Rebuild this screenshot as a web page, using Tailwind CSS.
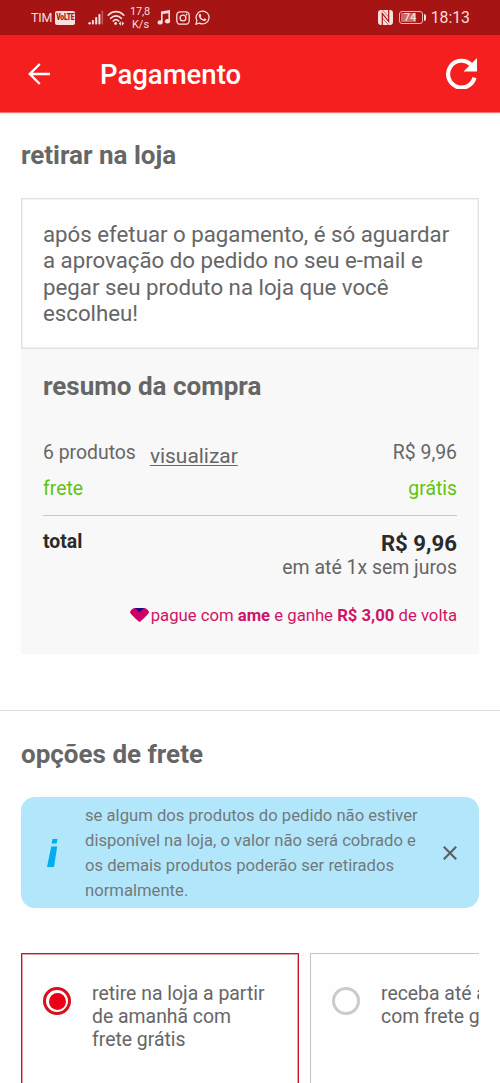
<!DOCTYPE html>
<html lang="pt-BR">
<head>
<meta charset="utf-8">
<meta name="viewport" content="width=device-width, initial-scale=1">
<title>Pagamento</title>
<script src="https://cdn.jsdelivr.net/npm/@tailwindcss/browser@4"></script>
</head>
<body class="h-[1083px] overflow-hidden bg-[#fefefe] font-['Roboto',sans-serif] text-[#666]">
<div class="flex h-[1083px] w-[500px] flex-col overflow-hidden whitespace-nowrap">
  <!-- status bar -->
  <div class="flex h-[35px] shrink-0 items-center bg-[#a61414] pl-[31px] pr-[30px] text-[#fbdede]">
    <span class="mt-px w-[21px] text-[12.5px] leading-none tracking-[-0.2px]">TIM</span>
    <span class="ml-[3px] flex h-[14px] w-5 items-center justify-center rounded-[2px] bg-[#fbdede] text-[#a61414]"><span class="scale-x-[.8] scale-y-[1.15] text-[8.5px] font-black leading-none tracking-[-0.3px]">VoLTE</span></span>
    <svg class="ml-[13px] h-[15px] w-4" viewBox="0 0 16 15" fill="currentColor"><circle cx="1.6" cy="13.3" r="1.2"/><rect x="3.9" y="10" width="2" height="4.5" rx=".8"/><rect x="7.2" y="7" width="2" height="7.5" rx=".8"/><rect x="10.4" y="4" width="2" height="10.5" rx=".8"/><rect x="13.5" y=".5" width="1.6" height="14" rx=".8" opacity=".35"/></svg>
    <svg class="ml-[3px] h-4 w-[18px]" viewBox="0 0 18 16" fill="none" stroke="currentColor" stroke-width="1.7" stroke-linecap="round"><path d="M1.2 5.2C5.5.3 12.5.3 16.8 5.2M3.7 8.3c3-3.3 7.6-3.3 10.6 0M6.2 11c1.7-1.6 3.9-1.6 5.6 0"/><circle cx="8.6" cy="13.5" r="1.4" fill="currentColor" stroke="none"/><path d="m13.9 11.3-2.2 2.2 2.2 2.2zm1 0 2.2 2.2-2.2 2.2z" fill="currentColor" stroke="none"/></svg>
    <span class="ml-[5px] mt-[2px] w-[21px] text-center text-[11px] leading-[12.5px]"><span class="-ml-px tracking-[-0.2px]">17,8</span><br>K/s</span>
    <svg class="ml-[6px] h-[15px] w-[14px]" viewBox="0 0 14 15" fill="currentColor"><path d="M4 1.400 13 0v11.200h-1.600V3.200L5.600 4.100v8.200H4z"/><ellipse cx="3.1" cy="12.4" rx="2.600" ry="2.200"/><ellipse cx="10.500" cy="11.200" rx="2.600" ry="2.200"/></svg>
    <svg class="ml-[5px] h-[14px] w-[14px]" viewBox="0 0 14 14" fill="none" stroke="currentColor" stroke-width="1.300"><rect x=".8" y=".8" width="12.400" height="12.400" rx="3.500"/><circle cx="7" cy="7" r="2.900"/><circle cx="10.600" cy="3.500" r=".9" fill="currentColor" stroke="none"/></svg>
    <svg class="ml-[5px] h-[15px] w-[15px]" viewBox="0 0 24 24" fill="currentColor"><path d="M17.472 14.382c-.297-.149-1.758-.867-2.030-.967-.273-.099-.471-.148-.670.150-.197.297-.767.966-.940 1.164-.173.199-.347.223-.644.075-.297-.150-1.255-.463-2.390-1.475-.883-.788-1.480-1.761-1.653-2.059-.173-.297-.018-.458.130-.606.134-.133.298-.347.446-.520.149-.174.198-.298.298-.497.099-.198.050-.371-.025-.520-.075-.149-.669-1.612-.916-2.207-.242-.579-.487-.500-.669-.510-.173-.008-.371-.010-.570-.010-.198 0-.520.074-.792.372-.272.297-1.040 1.016-1.040 2.479 0 1.462 1.065 2.875 1.213 3.074.149.198 2.096 3.200 5.077 4.487.709.306 1.262.489 1.694.625.712.227 1.360.195 1.871.118.571-.085 1.758-.719 2.006-1.413.248-.694.248-1.289.173-1.413-.074-.124-.272-.198-.570-.347z"/><path d="M1.500 22.500l1.600-5.600A10.300 10.300 0 1 1 7.200 21z" fill="none" stroke="currentColor" stroke-width="2"/></svg>
    <svg class="ml-auto h-[15px] w-[15px]" viewBox="0 0 15 15"><rect width="15" height="15" rx="3" fill="#fbdede"/><path d="M4.300 15V3.500L10.700 11.500V0" fill="none" stroke="#a61414" stroke-width="1.200"/><path d="M4.500 0 10.700 7M4.300 8l6.200 7" fill="none" stroke="#a61414" stroke-width=".6"/></svg>
    <span class="ml-[6px] flex h-[13px] w-6 rounded-[3px] border border-[#f0b5b5] p-px"><span class="flex w-[15px] items-center bg-[#c66b6b]"><span class="ml-[3px] text-[11px] font-medium leading-none">74</span></span></span>
    <span class="ml-px h-[7px] w-[2px] rounded-r bg-[#fbdede]"></span>
    <span class="ml-[5px] mt-px text-[15.800px] leading-none">18:13</span>
  </div>
  <!-- app bar -->
  <header class="flex h-[78px] shrink-0 items-center border-b border-[#f77] bg-[#f61f1f] pl-7 pr-[23px] text-white shadow-[0_1px_2px_rgba(0,0,0,0.08)]">
    <svg class="h-[22px] w-[22px]" viewBox="0 0 22 22" fill="none" stroke="currentColor" stroke-width="2.400"><path d="M22 11H1.800M11.800 1 1.800 11l10 10"/></svg>
    <h1 class="ml-[50px] mt-[3px] text-[27.500px] font-medium leading-none">Pagamento</h1>
    <svg class="ml-auto h-[31px] w-[31px]" viewBox="0 0 30 30"><path d="M24 6.200A13 13 0 1 0 27.600 19" fill="none" stroke="currentColor" stroke-width="4"/><path d="M30 0v13H17z" fill="currentColor"/></svg>
  </header>
  <main class="flex flex-1 flex-col">
    <section class="px-[21px]">
      <h2 class="mt-[27px] text-[26px] font-bold leading-[30px]">retirar na loja</h2>
      <p class="mt-7 h-[151px] border border-[#e0e0e0] px-[21px] pt-[22px] text-[22.250px] leading-[26.400px] ring-1 ring-inset ring-[#f3f3f3]">após efetuar o pagamento, é só aguardar<br>a aprovação do pedido no seu e-mail e<br>pegar seu produto na loja que você<br>escolheu!</p>
      <div class="flex h-[305px] flex-col bg-[#f8f8f8] px-[22px]">
        <h2 class="mt-[22px] text-[26px] font-bold leading-[30px]">resumo da compra</h2>
        <div class="mt-[40px] flex h-[30px] items-start text-[19.400px] leading-[24px]">
          <span>6 produtos</span>
          <a class="ml-[14px] mt-[3px] text-[20.900px] underline decoration-1 underline-offset-2">visualizar</a>
          <span class="ml-auto">R$ 9,96</span>
        </div>
        <div class="mt-[6px] flex justify-between text-[19.400px] leading-[24px] text-[#5fc410]"><span>frete</span><span>grátis</span></div>
        <div class="mt-[14px] h-px bg-[#c8c8c8]"></div>
        <div class="mt-[13px] flex h-[27px] justify-between leading-[24px] text-[#2a2a2a]">
          <span class="mt-px text-[19.400px] font-bold">total</span>
          <span class="mt-[2px] text-[22.200px] font-bold">R$ 9,96</span>
        </div>
        <div class="mt-px text-right text-[19.450px] leading-[22px]">em até 1x sem juros</div>
        <div class="mt-[26px] flex items-center justify-end text-[16.700px] leading-[22px] text-[#cf1465]">
          <svg class="mr-[2px] -mt-[3px] h-[14px] w-[19px]" viewBox="0 0 19 14"><path d="M4.500 0h10c1.500 0 4.500 3 4.500 4.200S11 13.200 9.500 14C8 13.200 0 5.500 0 4.200S3 0 4.500 0z" fill="#cc0066"/><path d="M5 0h9L10.500 3.400q-1 .9-2 0z" fill="#1c0a80"/></svg>
          <span>pague com <b>ame</b> e ganhe <b>R$ 3,00</b> de volta</span>
        </div>
      </div>
    </section>
    <section class="mt-[56px] border-t border-[#dedede] px-[21px]">
      <h2 class="mt-[28px] text-[26px] font-bold leading-[30px]">opções de frete</h2>
      <div class="mt-[28px] flex h-[111px] items-center rounded-[14px] bg-[#b2e7fb] pl-[26px] pr-[22px]">
        <svg class="h-7 w-[11px]" viewBox="0 0 11 28" fill="#00aeef"><path d="M5.500 0h5l-.8 4.500h-5zM4.200 7.500h6L7 28H0z"/></svg>
        <p class="ml-[27px] text-[16.650px] leading-[25px] text-[#73797c]">se algum dos produtos do pedido não estiver<br>disponível na loja, o valor não será cobrado e<br>os demais produtos poderão ser retirados<br>normalmente.</p>
        <svg class="ml-auto h-[14px] w-[14px]" viewBox="0 0 14 14" stroke="#5c6063" stroke-width="2.200"><path d="m.8.8 12.400 12.400M13.200.8.800 13.200"/></svg>
      </div>
      <div class="mt-[45px] flex h-[140px] gap-[11px] overflow-hidden text-[19.400px] leading-[22.800px]">
        <div class="flex h-[180px] w-[278px] shrink-0 border border-[#c4182a] pl-[21px] pt-[28px] ring-1 ring-inset ring-[#c4182a]/40">
          <span class="mt-[5px] flex h-7 w-7 items-center justify-center rounded-full border-[3px] border-[#d6101e]"><span class="h-[17px] w-[17px] rounded-full bg-[#ec0015]"></span></span>
          <p class="ml-[21px] mt-px">retire na loja a partir<br>de amanhã com<br>frete grátis</p>
        </div>
        <div class="flex h-[180px] w-[278px] shrink-0 border border-[#c4c4c4] pl-[21px] pt-[28px]">
          <span class="mt-[5px] h-7 w-7 shrink-0 rounded-full border-[3px] border-[#cbcbcb]"></span>
          <p class="ml-[21px] mt-px">receba até amanhã<br>com frete grátis</p>
        </div>
      </div>
    </section>
  </main>
</div>
</body>
</html>
